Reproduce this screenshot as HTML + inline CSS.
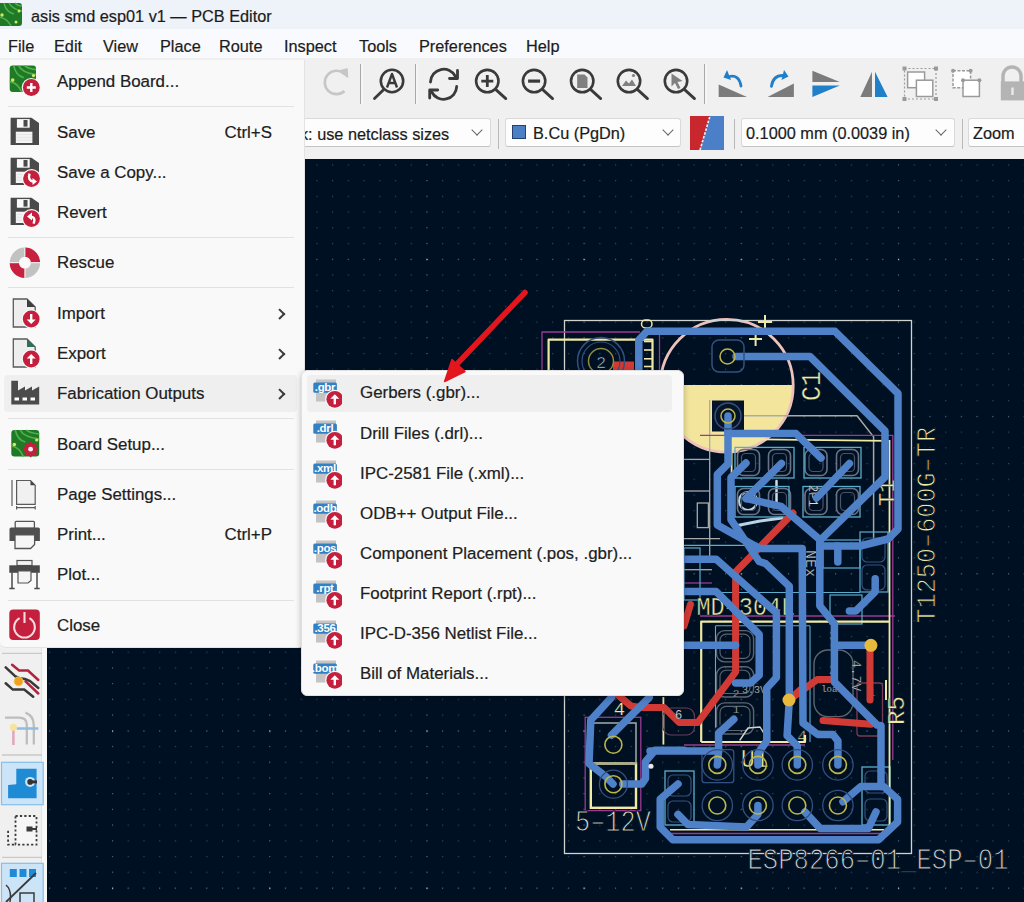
<!DOCTYPE html>
<html><head><meta charset="utf-8">
<style>
*{margin:0;padding:0;box-sizing:border-box}
body{-webkit-text-stroke:0.2px}
svg{-webkit-text-stroke:0}
html,body{width:1024px;height:902px;overflow:hidden;background:#001023;font-family:"Liberation Sans",sans-serif;color:#1b1b1b;position:relative}
.abs{position:absolute}
#title{left:0;top:0;width:1024px;height:29px;background:#eef2f9}
#menubar{left:0;top:29px;width:1024px;height:29px;background:#f9fafd}
.mb{position:absolute;top:37px;font-size:16.3px;color:#1c1c1c;white-space:pre}
#tb1{left:0;top:58px;width:1024px;height:59px;background:#f0f0f0}
#tb2{left:0;top:117px;width:1024px;height:42px;background:#f0f0f0}
#ltb{left:0;top:159px;width:47px;height:743px;background:#f0f0f0}
#canvas{left:47px;top:159px;width:977px;height:743px;background:#001023}
.sep{position:absolute;width:1px;background:#b9b9b9}
.dd{position:absolute;background:#fdfdfd;border:1px solid #d9d9d9;border-bottom-color:#c4c4c4;border-radius:3px;height:29px;top:118px;overflow:hidden}
.ddt{position:absolute;top:5px;font-size:16.3px;white-space:pre;color:#1b1b1b}
.chev{position:absolute;top:7px;width:8px;height:8px;border-right:1.3px solid #666;border-bottom:1.3px solid #666;transform:rotate(45deg)}
#fmenu{left:0;top:60px;width:305px;height:588px;background:#f9f9f9;border-right:1px solid #e3e3e3;border-bottom:1px solid #e3e3e3;border-radius:0 0 6px 6px}
#smenu{left:301px;top:370px;width:383px;height:326px;background:#f9f9f9;border:1px solid #e0e0e0;border-radius:6px;box-shadow:0 2px 6px rgba(0,0,0,0.25)}
.mi{position:absolute;font-size:16.9px;white-space:pre;color:#202020}
.msep{position:absolute;left:8px;width:286px;height:1px;background:#e2e2e2}
.hl{position:absolute;background:#efefef;border-radius:4px}
.arr{position:absolute;width:7.5px;height:7.5px;border-right:2px solid #3a3a3a;border-top:2px solid #3a3a3a;transform:rotate(45deg)}
</style></head>
<body>
<div id="title" class="abs"></div>
<div id="menubar" class="abs"></div>
<div class="abs" style="left:31px;top:7px;font-size:16.3px;white-space:pre;color:#1b1b1b">asis smd esp01 v1 — PCB Editor</div>
<div class="mb" style="left:8px">File</div>
<div class="mb" style="left:54px">Edit</div>
<div class="mb" style="left:103px">View</div>
<div class="mb" style="left:160px">Place</div>
<div class="mb" style="left:219px">Route</div>
<div class="mb" style="left:284px">Inspect</div>
<div class="mb" style="left:359px">Tools</div>
<div class="mb" style="left:419px">Preferences</div>
<div class="mb" style="left:526px">Help</div>
<div id="tb1" class="abs"></div>
<div id="tb2" class="abs"></div>
<div id="canvas" class="abs"></div>
<div id="ltb" class="abs"></div><div class="abs" style="left:41px;top:159px;width:6px;height:743px;background:#f7f8f8;border-left:1px solid #e2e2e2"></div>
<div class="dd" style="left:250px;width:241px"><span class="ddt" style="left:17px;top:5.5px">Track: use netclass sizes</span><span class="chev" style="left:222px"></span></div>
<div class="sep" style="left:498px;top:119px;height:30px"></div>
<div class="dd" style="left:505px;width:176px"><span class="abs" style="left:6px;top:6px;width:14px;height:13.5px;background:#4d7fc4;border:1.5px solid #23406e"></span><span class="ddt" style="left:27px">B.Cu (PgDn)</span><span class="chev" style="left:158px"></span></div>
<div class="sep" style="left:734px;top:119px;height:30px"></div>
<div class="dd" style="left:741px;width:214px"><span class="ddt" style="left:4px">0.1000 mm (0.0039 in)</span><span class="chev" style="left:195px"></span></div>
<div class="sep" style="left:962px;top:119px;height:30px"></div>
<div class="dd" style="left:968px;width:70px"><span class="ddt" style="left:4px">Zoom</span></div>

<svg class="abs" style="left:0;top:0" width="1024" height="902" viewBox="0 0 1024 902"><path d="M344 73.5A11.7 11.7 0 1 0 344.5 91" stroke="#c6c6c6" stroke-width="2.6" fill="none"/><path d="M339.5 71L347 69L347.5 77Z" fill="#c6c6c6" stroke="#c6c6c6" stroke-width="1.5" stroke-linejoin="round"/><path d="M360.5 64V104" stroke="#a9a9a9" stroke-width="1"/><path d="M362.0 64V104" stroke="#fbfbfb" stroke-width="1"/><path d="M415.5 64V104" stroke="#a9a9a9" stroke-width="1"/><path d="M417.0 64V104" stroke="#fbfbfb" stroke-width="1"/><path d="M704.5 64V104" stroke="#a9a9a9" stroke-width="1"/><path d="M706.0 64V104" stroke="#fbfbfb" stroke-width="1"/><circle cx="392" cy="81" r="11.2" stroke="#3a3a3a" stroke-width="2.6" fill="none"/><path d="M383.8 89.5L374.5 98.5" stroke="#3a3a3a" stroke-width="2.8" stroke-linecap="round"/><path d="M387 87.5L392 74L397 87.5M388.8 83H395.2" stroke="#3a3a3a" stroke-width="2.4" fill="none" stroke-linejoin="round"/><path d="M430.5 82A13.2 13.2 0 0 1 455.5 76.5" stroke="#3a3a3a" stroke-width="2.8" fill="none" stroke-linecap="round"/><path d="M457.5 70.5V78.5H449.5" stroke="#3a3a3a" stroke-width="2.8" fill="none" stroke-linecap="round" stroke-linejoin="round"/><path d="M456.7 86.5A13.2 13.2 0 0 1 431.7 92" stroke="#3a3a3a" stroke-width="2.8" fill="none" stroke-linecap="round"/><path d="M429.7 98V90H437.7" stroke="#3a3a3a" stroke-width="2.8" fill="none" stroke-linecap="round" stroke-linejoin="round"/><circle cx="487.3" cy="81.1" r="11.2" stroke="#3a3a3a" stroke-width="2.6" fill="none"/><path d="M495.6 89.4L505.8 98.6" stroke="#3a3a3a" stroke-width="2.8" stroke-linecap="round"/><path d="M481.3 81.1H493.3M487.3 75.1V87.1" stroke="#3a3a3a" stroke-width="2.8"/><circle cx="534.1" cy="81.1" r="11.2" stroke="#3a3a3a" stroke-width="2.6" fill="none"/><path d="M542.4 89.4L552.6 98.6" stroke="#3a3a3a" stroke-width="2.8" stroke-linecap="round"/><path d="M528.1 81.1H540.1" stroke="#3a3a3a" stroke-width="3.2"/><circle cx="582.2" cy="81.1" r="11.2" stroke="#3a3a3a" stroke-width="2.6" fill="none"/><path d="M590.5 89.4L600.7 98.6" stroke="#3a3a3a" stroke-width="2.8" stroke-linecap="round"/><path d="M577.2 74.5H584.5L587.5 77.5V88H577.2Z" fill="#808080"/><circle cx="629" cy="81.1" r="11.2" stroke="#3a3a3a" stroke-width="2.6" fill="none"/><path d="M637.3 89.4L647.5 98.6" stroke="#3a3a3a" stroke-width="2.8" stroke-linecap="round"/><path d="M622 86L626 80.5L629 83.5L632 79.5L636 86Z" fill="#808080"/><circle cx="633.5" cy="75.5" r="1.6" fill="#808080"/><circle cx="676" cy="81.1" r="11.2" stroke="#3a3a3a" stroke-width="2.6" fill="none"/><path d="M684.3 89.4L694.5 98.6" stroke="#3a3a3a" stroke-width="2.8" stroke-linecap="round"/><path d="M671.5 73.5L682.5 81L677.5 82L680.5 88L678 89L675 83L671.5 86.5Z" fill="#808080"/><path d="M718.7 84.4V97.1H747Z" fill="#7b7b7b"/><path d="M729.5 76.5Q739 74.5 741 86" stroke="#1f7fc9" stroke-width="2.8" fill="none" stroke-linecap="round"/><path d="M727 70L723.5 77.5L731 80Z" fill="#1f7fc9"/><path d="M767.5 97.1L793.9 83.4V97.1Z" fill="#7b7b7b"/><path d="M771.4 86.4Q773 75.5 782.5 75.5" stroke="#1f7fc9" stroke-width="2.8" fill="none" stroke-linecap="round"/><path d="M784 70L788.5 76.5L781.5 80Z" fill="#1f7fc9"/><path d="M812.4 70.7L839.8 82L812.4 82Z" fill="#7b7b7b"/><path d="M812.4 85.4H839.8L812.4 97.1Z" fill="#1f7fc9"/><path d="M860.3 97.1L872 71.7V97.1Z" fill="#7b7b7b"/><path d="M875 71.7V97.1H887.6Z" fill="#1f7fc9"/><rect x="904.5" y="68.5" width="31.5" height="30.5" stroke="#9c9c9c" stroke-width="1.2" stroke-dasharray="2 2" fill="none"/><rect x="907.6" y="72" width="17" height="15.7" fill="#fff" stroke="#9a9a9a" stroke-width="1.5"/><rect x="916.4" y="80.2" width="16.4" height="16.3" fill="#fff" stroke="#9a9a9a" stroke-width="1.5"/><rect x="902.5" y="66.5" width="4" height="4" fill="#9a9a9a"/><rect x="934" y="66.5" width="4" height="4" fill="#9a9a9a"/><rect x="902.5" y="97" width="4" height="4" fill="#9a9a9a"/><rect x="934" y="97" width="4" height="4" fill="#9a9a9a"/><rect x="953" y="70.7" width="17.6" height="17" fill="#fff" stroke="#9a9a9a" stroke-width="1.5" stroke-dasharray="3 1.5"/><rect x="963" y="80.2" width="16.4" height="16.3" fill="#fff" stroke="#9a9a9a" stroke-width="1.5"/><circle cx="953" cy="70.7" r="2" fill="#9a9a9a"/><circle cx="970.6" cy="70.7" r="2" fill="#9a9a9a"/><circle cx="963" cy="80.2" r="2" fill="#9a9a9a"/><circle cx="979.4" cy="80.2" r="2" fill="#9a9a9a"/><path d="M1003 82V76A9 9 0 0 1 1021 76V82" stroke="#b4b4b4" stroke-width="3.5" fill="none"/><rect x="1000.8" y="81.4" width="24" height="19" fill="#b4b4b4"/><path d="M1012.5 87.5V95" stroke="#e8e8e8" stroke-width="2.5"/><rect x="690" y="116" width="34" height="34" fill="#4b7fc8"/><path d="M690 116H710L700 150H690Z" fill="#c8272d"/><path d="M700 150L710 116" stroke="#f5f5f5" stroke-width="1.6" stroke-dasharray="2.5 1.5"/><rect x="-2" y="3" width="24" height="23" rx="3" fill="#1f7a27"/><path d="M4 3Q6 12 14 14M9 3Q12 9 22 11M15 3Q18 6 22 6M-2 17Q7 18 11 26" stroke="#52b04c" stroke-width="1.5" fill="none"/><circle cx="2" cy="15" r="1.7" fill="#d9e85a"/><circle cx="19" cy="11" r="1.5" fill="#d9e85a"/><circle cx="16" cy="22" r="1.5" fill="#d9e85a"/><path d="M2 653.3H42" stroke="#c9c9c9" stroke-width="1.3"/><path d="M2 755H42" stroke="#c9c9c9" stroke-width="1.3"/><path d="M2 857.3H42" stroke="#c9c9c9" stroke-width="1.3"/><path d="M5.7 667.3L15.3 676.3Q19 679 25 679L30 681L38.3 688" stroke="#383838" stroke-width="2.5" fill="none" stroke-linecap="round"/><path d="M5.7 683.3L12.8 689.6H24.2L33.2 696.7" stroke="#383838" stroke-width="2.5" fill="none" stroke-linecap="round"/><path d="M12.1 664.8L19.1 670.5H28L38.3 680" stroke="#b0243f" stroke-width="2.5" fill="none" stroke-linecap="round"/><path d="M25.5 681.4L38.3 693.5" stroke="#b0243f" stroke-width="2.5" fill="none" stroke-linecap="round"/><circle cx="18.5" cy="681.4" r="4.5" fill="#f0a020" stroke="#f7d060" stroke-width="1"/><path d="M5 717.7H19Q26.8 717.7 26.8 725V744.5" stroke="#bdbdbd" stroke-width="2.3" fill="none"/><path d="M25.5 712.6Q33.8 716 33.8 725V744.5" stroke="#bdbdbd" stroke-width="2.3" fill="none"/><path d="M13.4 728V745" stroke="#e0a7b8" stroke-width="2.5"/><path d="M16.6 728.5H38.3" stroke="#8fbce3" stroke-width="2.5"/><circle cx="13.4" cy="727.3" r="3.5" fill="#f8e39a"/><rect x="1.5" y="762.3" width="41.7" height="42.4" fill="#cce4f7" stroke="#86bfea" stroke-width="1.2"/><path d="M8.1 785V798.2H36.6V768.8H16.3V784.3Z" fill="#1f8bd5"/><circle cx="30.1" cy="781.9" r="5" fill="#cce4f7"/><circle cx="30.1" cy="781.9" r="2.8" fill="#333"/><path d="M30 781.9H37" stroke="#333" stroke-width="3"/><rect x="15.5" y="816" width="21" height="28.6" stroke="#3a3a3a" stroke-width="1.8" stroke-dasharray="2.2 2.2" fill="#f6f6f6"/><path d="M8.1 830.7V844.6H15.5" stroke="#3a3a3a" stroke-width="1.8" stroke-dasharray="2.2 2.2" fill="none"/><rect x="26.5" y="826.5" width="6" height="5" fill="#3a3a3a"/><path d="M32 829H37" stroke="#3a3a3a" stroke-width="2"/><rect x="1.5" y="863.3" width="41.7" height="45" fill="#cce4f7" stroke="#86bfea" stroke-width="1.2"/><rect x="9.8" y="869" width="7" height="8" fill="#1f8bd5"/><rect x="19.5" y="869" width="7" height="8" fill="#1f8bd5"/><rect x="29" y="869" width="7" height="8" fill="#1f8bd5"/><path d="M6 902L36 873" stroke="#3a3a3a" stroke-width="1.8"/><path d="M6 885Q12 890 10 902M20 902V893H34V902" stroke="#3a3a3a" stroke-width="1.5" fill="none"/></svg>
<svg class="abs" style="left:0;top:0" width="1024" height="902" viewBox="0 0 1024 902"><g clip-path="url(#cv)"><defs><pattern id="g" x="1.9" y="7.1" width="15.72" height="15.72" patternUnits="userSpaceOnUse"><rect x="-1.2" y="-1.2" width="2.4" height="2.4" fill="#36465a"/></pattern><pattern id="gr" x="1.9" y="259" width="15.72" height="157.2" patternUnits="userSpaceOnUse"><rect x="-1" y="-1" width="2" height="2" fill="#4f5d6e"/></pattern><pattern id="gc" x="112" y="7.1" width="157.2" height="15.72" patternUnits="userSpaceOnUse"><rect x="-1" y="-1" width="2" height="2" fill="#4f5d6e"/></pattern><pattern id="G" x="112" y="259" width="157.2" height="157.2" patternUnits="userSpaceOnUse"><rect x="-1.2" y="-1.2" width="2.4" height="2.4" fill="#a9b2bc"/></pattern><clipPath id="c1h"><rect x="650" y="385" width="160" height="80"/></clipPath><clipPath id="cv"><rect x="47" y="159" width="977" height="743"/></clipPath></defs><rect x="47" y="159" width="977" height="743" fill="url(#g)"/><rect x="47" y="159" width="977" height="743" fill="url(#gr)"/><rect x="47" y="159" width="977" height="743" fill="url(#gc)"/><rect x="47" y="159" width="977" height="743" fill="url(#G)"/><circle cx="726.8" cy="385.7" r="66.4" fill="#f3e69c" clip-path="url(#c1h)"/><circle cx="726.8" cy="385.7" r="66.4" stroke="#eec2ba" stroke-width="2.8" fill="none"/><rect x="564.5" y="320.5" width="347.0" height="533.0" rx="0" stroke="#d0d2cd" stroke-width="1.3" fill="none"/><path d="M744.0 415.8 L857.0 415.8 L873.6 436.9 L873.6 540.0" stroke="#a9a9a9" stroke-width="1.5" fill="none" stroke-linejoin="round" stroke-linecap="butt"/><path d="M709.7 400.0 L709.7 560.0" stroke="#a9a9a9" stroke-width="1.3" fill="none" stroke-linejoin="round" stroke-linecap="butt"/><path d="M684.0 459.4 L709.7 459.4" stroke="#a9a9a9" stroke-width="1.3" fill="none" stroke-linejoin="round" stroke-linecap="butt"/><path d="M684.0 491.0 L709.7 491.0" stroke="#a9a9a9" stroke-width="1.3" fill="none" stroke-linejoin="round" stroke-linecap="butt"/><path d="M684.0 538.6 L720.0 538.6" stroke="#a9a9a9" stroke-width="1.3" fill="none" stroke-linejoin="round" stroke-linecap="butt"/><path d="M684.0 545.3 L764.0 545.3" stroke="#5aaecb" stroke-width="1.2" fill="none" stroke-linejoin="round" stroke-linecap="butt"/><rect x="697.3" y="503" width="11.1" height="24.6" rx="0" stroke="#a9a9a9" stroke-width="1.3" fill="none"/><path d="M684.0 569.7 L712.0 569.7" stroke="#a9a9a9" stroke-width="1.3" fill="none" stroke-linejoin="round" stroke-linecap="butt"/><path d="M684.0 583.0 L712.0 583.0" stroke="#9a3a93" stroke-width="1.3" fill="none" stroke-linejoin="round" stroke-linecap="butt"/><path d="M735.0 526.0 L760.0 521.0 L782.0 518.0" stroke="#b9d4e4" stroke-width="3" fill="none" stroke-linejoin="round" stroke-linecap="round"/><path d="M776.5 481.0 L776.5 505.0" stroke="#d0dbe3" stroke-width="2.5" fill="none" stroke-linejoin="round" stroke-linecap="round"/><circle cx="748" cy="501" r="9" stroke="#b9d4e4" stroke-width="2.2" fill="none"/><path d="M542.0 380.0 L542.0 332.0 L640.0 332.0" stroke="#9a3a93" stroke-width="1.3" fill="none" stroke-linejoin="round" stroke-linecap="butt"/><path d="M659.5 335.0 L659.5 380.0" stroke="#9a3a93" stroke-width="1.3" fill="none" stroke-linejoin="round" stroke-linecap="butt"/><path d="M700.0 435.3 L893.0 435.3" stroke="#9a3a93" stroke-width="1.3" fill="none" stroke-linejoin="round" stroke-linecap="butt"/><path d="M892.8 435.0 L892.8 760.0" stroke="#9a3a93" stroke-width="1.3" fill="none" stroke-linejoin="round" stroke-linecap="butt"/><path d="M700.0 616.0 L895.0 616.0" stroke="#9a3a93" stroke-width="1.3" fill="none" stroke-linejoin="round" stroke-linecap="butt"/><path d="M684.0 745.0 L805.0 745.0" stroke="#9a3a93" stroke-width="1.3" fill="none" stroke-linejoin="round" stroke-linecap="butt"/><path d="M667.0 833.5 L890.0 833.5" stroke="#9a3a93" stroke-width="1.3" fill="none" stroke-linejoin="round" stroke-linecap="butt"/><rect x="585.2" y="717.3" width="55.6" height="93.3" rx="0" stroke="#9a3a93" stroke-width="1.3" fill="none"/><rect x="737.5" y="449.5" width="22.0" height="26.0" rx="6" stroke="#6a7386" stroke-width="1.6" fill="none"/><rect x="741.5" y="453.5" width="14.0" height="18.0" rx="4" stroke="#4a5468" stroke-width="1.2" fill="none"/><rect x="768.5" y="449.5" width="22.0" height="26.0" rx="6" stroke="#6a7386" stroke-width="1.6" fill="none"/><rect x="772.5" y="453.5" width="14.0" height="18.0" rx="4" stroke="#4a5468" stroke-width="1.2" fill="none"/><rect x="805" y="449.5" width="22.0" height="26.0" rx="6" stroke="#6a7386" stroke-width="1.6" fill="none"/><rect x="809" y="453.5" width="14.0" height="18.0" rx="4" stroke="#4a5468" stroke-width="1.2" fill="none"/><rect x="836.5" y="449.5" width="22.0" height="26.0" rx="6" stroke="#6a7386" stroke-width="1.6" fill="none"/><rect x="840.5" y="453.5" width="14.0" height="18.0" rx="4" stroke="#4a5468" stroke-width="1.2" fill="none"/><rect x="737.5" y="488.5" width="22.0" height="26.0" rx="6" stroke="#6a7386" stroke-width="1.6" fill="none"/><rect x="741.5" y="492.5" width="14.0" height="18.0" rx="4" stroke="#4a5468" stroke-width="1.2" fill="none"/><rect x="768.5" y="488.5" width="22.0" height="26.0" rx="6" stroke="#6a7386" stroke-width="1.6" fill="none"/><rect x="772.5" y="492.5" width="14.0" height="18.0" rx="4" stroke="#4a5468" stroke-width="1.2" fill="none"/><rect x="805" y="488.5" width="22.0" height="26.0" rx="6" stroke="#6a7386" stroke-width="1.6" fill="none"/><rect x="809" y="492.5" width="14.0" height="18.0" rx="4" stroke="#4a5468" stroke-width="1.2" fill="none"/><rect x="836.5" y="488.5" width="22.0" height="26.0" rx="6" stroke="#6a7386" stroke-width="1.6" fill="none"/><rect x="840.5" y="492.5" width="14.0" height="18.0" rx="4" stroke="#4a5468" stroke-width="1.2" fill="none"/><rect x="735" y="447.4" width="59.0" height="30.6" rx="0" stroke="#5aaecb" stroke-width="1.3" fill="none"/><rect x="804" y="447.4" width="57.0" height="30.6" rx="0" stroke="#5aaecb" stroke-width="1.3" fill="none"/><rect x="735" y="486.5" width="54.0" height="30.5" rx="0" stroke="#5aaecb" stroke-width="1.3" fill="none"/><rect x="803" y="486.5" width="57.0" height="30.5" rx="0" stroke="#5aaecb" stroke-width="1.3" fill="none"/><text x="0" y="0" fill="#d8dde0" stroke="#001023" stroke-width="0.2" font-family="Liberation Mono" font-size="12" text-anchor="start" letter-spacing="0" font-weight="normal" transform="translate(809 485) rotate(90) scale(1 1.0)">2P1</text><rect x="860" y="532" width="28.0" height="60.0" rx="0" stroke="#5aaecb" stroke-width="1.2" fill="none"/><rect x="862" y="538" width="23.0" height="24.0" rx="5" stroke="#34507e" stroke-width="1.2" fill="none"/><rect x="862" y="565" width="23.0" height="25.0" rx="5" stroke="#34507e" stroke-width="1.2" fill="none"/><rect x="823" y="540" width="37.0" height="28.0" rx="0" stroke="#5aaecb" stroke-width="1.2" fill="none"/><rect x="830" y="595" width="32.0" height="29.0" rx="0" stroke="#5aaecb" stroke-width="1.2" fill="none"/><rect x="716.5" y="630.6" width="37.1" height="31.3" rx="8" stroke="#5d6470" stroke-width="1.4" fill="none"/><rect x="720" y="634.1" width="30.0" height="24.3" rx="6" stroke="#5d6470" stroke-width="1.1" fill="none"/><rect x="716.5" y="666.8" width="37.1" height="30.2" rx="8" stroke="#5d6470" stroke-width="1.4" fill="none"/><rect x="720" y="670.3" width="30.0" height="23.2" rx="6" stroke="#5d6470" stroke-width="1.1" fill="none"/><rect x="716.5" y="702.9" width="37.1" height="31.1" rx="8" stroke="#5d6470" stroke-width="1.4" fill="none"/><rect x="720" y="706.4" width="30.0" height="24.1" rx="6" stroke="#5d6470" stroke-width="1.1" fill="none"/><path d="M715.5 626.0 L715.5 742.0" stroke="#5aaecb" stroke-width="1.1" fill="none" stroke-linejoin="round" stroke-linecap="butt"/><path d="M715.5 625.7 L810.0 625.7" stroke="#5aaecb" stroke-width="1.1" fill="none" stroke-linejoin="round" stroke-linecap="butt"/><rect x="814" y="650" width="39.0" height="66.6" rx="14" stroke="#5d6470" stroke-width="1.4" fill="none"/><rect x="857" y="683" width="25.5" height="53.0" rx="3" stroke="#7a3a55" stroke-width="1.3" fill="none"/><path d="M810.0 626.0 L810.0 742.0" stroke="#5aaecb" stroke-width="1.1" fill="none" stroke-linejoin="round" stroke-linecap="butt"/><text x="0" y="0" fill="#d0d2cd" stroke="#001023" stroke-width="0.4" font-family="Liberation Mono" font-size="13" text-anchor="middle" letter-spacing="0" font-weight="normal" transform="translate(833 640) rotate(0) scale(1 1.0)">3</text><text x="0" y="0" fill="#d0d2cd" stroke="#001023" stroke-width="0.4" font-family="Liberation Mono" font-size="13" text-anchor="middle" letter-spacing="0" font-weight="normal" transform="translate(833 674) rotate(0) scale(1 1.0)">2</text><text x="0" y="0" fill="#d0d2cd" stroke="#001023" stroke-width="0.3" font-family="Liberation Mono" font-size="11" text-anchor="middle" letter-spacing="0" font-weight="normal" transform="translate(736 660) rotate(0) scale(1 1.0)">3</text><text x="0" y="0" fill="#d0d2cd" stroke="#001023" stroke-width="0.3" font-family="Liberation Mono" font-size="11" text-anchor="middle" letter-spacing="0" font-weight="normal" transform="translate(736 697) rotate(0) scale(1 1.0)">2</text><text x="0" y="0" fill="#d0d2cd" stroke="#001023" stroke-width="0.3" font-family="Liberation Mono" font-size="11" text-anchor="middle" letter-spacing="0" font-weight="normal" transform="translate(736 713) rotate(0) scale(1 1.0)">1</text><text x="0" y="0" fill="#d0d2cd" stroke="#001023" stroke-width="0.2" font-family="Liberation Mono" font-size="10" text-anchor="middle" letter-spacing="0" font-weight="normal" transform="translate(754 693) rotate(0) scale(1 1.0)">3.3V</text><text x="0" y="0" fill="#d0d2cd" stroke="#001023" stroke-width="0.2" font-family="Liberation Mono" font-size="9" text-anchor="middle" letter-spacing="0" font-weight="normal" transform="translate(832 692) rotate(0) scale(1 1.0)">load</text><text x="0" y="0" fill="#d0d2cd" stroke="#001023" stroke-width="0.3" font-family="Liberation Mono" font-size="13" text-anchor="start" letter-spacing="0" font-weight="normal" transform="translate(852 660) rotate(90) scale(1 1.0)">4.7V</text><path d="M740.0 740.0 L748.0 728.0 L760.0 727.0 L765.0 735.0" stroke="#d0d2cd" stroke-width="1.4" fill="none" stroke-linejoin="round" stroke-linecap="round"/><text x="0" y="0" fill="#efe9a6" stroke="#001023" stroke-width="0.5" font-family="Liberation Mono" font-size="16" text-anchor="middle" letter-spacing="0" font-weight="normal" transform="translate(802 742) rotate(0) scale(1 1.0)">4</text><text x="0" y="0" fill="#d0d2cd" stroke="#001023" stroke-width="0.3" font-family="Liberation Mono" font-size="11" text-anchor="middle" letter-spacing="0" font-weight="normal" transform="translate(872 696) rotate(0) scale(1 1.0)">1</text><rect x="684" y="548" width="16.0" height="52.0" rx="0" stroke="#5aaecb" stroke-width="1.2" fill="none"/><rect x="665" y="771" width="29.0" height="54.0" rx="0" stroke="#5aaecb" stroke-width="1.3" fill="none"/><rect x="668" y="775" width="23.0" height="21.0" rx="5" stroke="#34507e" stroke-width="1.2" fill="none"/><rect x="668" y="801" width="23.0" height="21.0" rx="5" stroke="#34507e" stroke-width="1.2" fill="none"/><rect x="862" y="767" width="28.0" height="58.0" rx="0" stroke="#5aaecb" stroke-width="1.3" fill="none"/><rect x="865" y="771" width="22.0" height="22.0" rx="5" stroke="#34507e" stroke-width="1.2" fill="none"/><rect x="865" y="799" width="22.0" height="22.0" rx="5" stroke="#34507e" stroke-width="1.2" fill="none"/><rect x="702" y="749.7" width="31.8" height="33.0" rx="3" stroke="#34507e" stroke-width="1.3" fill="none"/><path d="M548.6 380.0 L548.6 339.7 L652.5 339.7 L652.5 380.0" stroke="#efe9a6" stroke-width="2.2" fill="none" stroke-linejoin="round" stroke-linecap="butt"/><path d="M731.6 480.0 L731.6 439.0 L888.4 440.8" stroke="#efe9a6" stroke-width="1.8" fill="none" stroke-linejoin="round" stroke-linecap="butt"/><path d="M889.5 440.0 L889.5 830.0" stroke="#efe9a6" stroke-width="1.8" fill="none" stroke-linejoin="round" stroke-linecap="butt"/><path d="M701.2 742.0 L701.2 621.6 L889.0 621.6" stroke="#efe9a6" stroke-width="2.2" fill="none" stroke-linejoin="round" stroke-linecap="butt"/><path d="M701.2 742.0 L805.0 742.0 L805.0 735.0" stroke="#efe9a6" stroke-width="2.2" fill="none" stroke-linejoin="round" stroke-linecap="butt"/><path d="M670.0 829.7 L884.0 829.7" stroke="#efe9a6" stroke-width="1.6" fill="none" stroke-linejoin="round" stroke-linecap="butt"/><path d="M663.4 697.0 L663.4 744.6" stroke="#efe9a6" stroke-width="1.8" fill="none" stroke-linejoin="round" stroke-linecap="butt"/><rect x="663" y="708" width="31.5" height="27.0" rx="8" stroke="#6a3a5a" stroke-width="1.2" fill="none"/><text x="0" y="0" fill="#efe9a6" stroke="#001023" stroke-width="0.4" font-family="Liberation Mono" font-size="22" text-anchor="start" letter-spacing="0" font-weight="normal" transform="translate(894 506) rotate(-90) scale(1 1.0)">T1</text><rect x="590.8" y="763.5" width="45.2" height="44.3" rx="0" stroke="#efe9a6" stroke-width="2.4" fill="none"/><rect x="590.8" y="723" width="45.2" height="40.5" rx="0" stroke="#a9a9a9" stroke-width="1.5" fill="none"/><path d="M758.0 322.0 L772.0 322.0" stroke="#efe9a6" stroke-width="2" fill="none" stroke-linejoin="round" stroke-linecap="butt"/><path d="M765.0 315.0 L765.0 329.0" stroke="#efe9a6" stroke-width="2" fill="none" stroke-linejoin="round" stroke-linecap="butt"/><path d="M749.0 339.0 L762.0 339.0" stroke="#efe9a6" stroke-width="2" fill="none" stroke-linejoin="round" stroke-linecap="butt"/><path d="M755.6 333.0 L755.6 346.0" stroke="#efe9a6" stroke-width="2" fill="none" stroke-linejoin="round" stroke-linecap="butt"/><path d="M886.0 680.0 L886.0 700.0" stroke="#efe9a6" stroke-width="2" fill="none" stroke-linejoin="round" stroke-linecap="butt"/><text x="0" y="0" fill="#efe9a6" stroke="#001023" stroke-width="0.3" font-family="Liberation Mono" font-size="25" text-anchor="start" letter-spacing="0" font-weight="normal" transform="translate(819.5 401) rotate(-90) scale(1 1.1)">C1</text><text x="0" y="0" fill="#efe9a6" stroke="#001023" stroke-width="0.9" font-family="Liberation Mono" font-size="25.2" text-anchor="start" letter-spacing="0" font-weight="normal" transform="translate(935 623.5) rotate(-90) scale(1 1.08)">T1250–600G–TR</text><text x="0" y="0" fill="#cfcfcf" stroke="#001023" stroke-width="0.9" font-family="Liberation Mono" font-size="25.6" text-anchor="start" letter-spacing="0" font-weight="normal" transform="translate(747.5 868.5) rotate(0) scale(1 1.15)">ESP8266–01_ESP–01</text><text x="0" y="0" fill="#dcdac8" stroke="#001023" stroke-width="0.9" font-family="Liberation Mono" font-size="25.3" text-anchor="start" letter-spacing="0" font-weight="normal" transform="translate(575 831) rotate(0) scale(1 1.2)">5–12V</text><text x="0" y="0" fill="#efe9a6" stroke="#001023" stroke-width="0.4" font-family="Liberation Mono" font-size="24" text-anchor="start" letter-spacing="0" font-weight="normal" transform="translate(904 725) rotate(-90) scale(1 1.0)">R5</text><text x="0" y="0" fill="#efe9a6" stroke="#001023" stroke-width="0.4" font-family="Liberation Mono" font-size="23.5" text-anchor="start" letter-spacing="0" font-weight="normal" transform="translate(696.5 614.5) rotate(0) scale(1 1.12)">MD–304L</text><text x="0" y="0" fill="#efe9a6" stroke="#001023" stroke-width="0.4" font-family="Liberation Mono" font-size="23" text-anchor="start" letter-spacing="0" font-weight="normal" transform="translate(741 767) rotate(0) scale(1 1.1)">U1</text><text x="0" y="0" fill="#d8dde0" stroke="#001023" stroke-width="0.3" font-family="Liberation Mono" font-size="15" text-anchor="start" letter-spacing="0" font-weight="normal" transform="translate(806 550) rotate(90) scale(1 1.0)">NEx</text><path d="M684.0 592.5 L860.0 592.5" stroke="#5aaecb" stroke-width="1.1" fill="none" stroke-linejoin="round" stroke-linecap="butt"/><path d="M644.0 341.5 L652.5 341.5" stroke="#efe9a6" stroke-width="1.6" fill="none" stroke-linejoin="round" stroke-linecap="butt"/><path d="M644.0 350.0 L652.5 350.0" stroke="#efe9a6" stroke-width="1.6" fill="none" stroke-linejoin="round" stroke-linecap="butt"/><path d="M644.0 358.8 L652.5 358.8" stroke="#efe9a6" stroke-width="1.6" fill="none" stroke-linejoin="round" stroke-linecap="butt"/><path d="M644.0 366.5 L652.5 366.5" stroke="#efe9a6" stroke-width="1.6" fill="none" stroke-linejoin="round" stroke-linecap="butt"/><rect x="641.5" y="320" width="10.5" height="8.0" rx="4" stroke="#efe9a6" stroke-width="1.5" fill="none"/><text x="0" y="0" fill="#efe9a6" stroke="#001023" stroke-width="0.25" font-family="Liberation Mono" font-size="19" text-anchor="middle" letter-spacing="0" font-weight="normal" transform="translate(619.5 714.5) rotate(0) scale(1 0.95)">4</text><text x="0" y="0" fill="#d0d2cd" stroke="#001023" stroke-width="0.9" font-family="Liberation Mono" font-size="10" text-anchor="start" letter-spacing="0" font-weight="normal" transform="translate(718 735) rotate(-40) scale(1 1.0)">GND</text><rect x="712" y="400.5" width="32" height="31" fill="#06142a"/><path d="M613.0 366.0 L634.0 366.0" stroke="#d23a36" stroke-width="9" fill="none" stroke-linejoin="round" stroke-linecap="butt"/><path d="M793.0 513.0 L735.6 572.0 L735.6 672.0 L698.0 722.4 L679.0 722.4 L664.0 707.4 L640.7 707.4 L631.0 706.0 L612.0 690.0" stroke="#d23a36" stroke-width="7" fill="none" stroke-linejoin="round" stroke-linecap="round"/><path d="M684.0 626.0 L690.4 604.4" stroke="#d23a36" stroke-width="7" fill="none" stroke-linejoin="round" stroke-linecap="round"/><path d="M789.0 700.0 L817.2 679.6 L832.2 679.6" stroke="#d23a36" stroke-width="7" fill="none" stroke-linejoin="round" stroke-linecap="round"/><path d="M870.0 645.0 L870.0 700.0" stroke="#d23a36" stroke-width="7" fill="none" stroke-linejoin="round" stroke-linecap="round"/><path d="M823.0 720.5 L871.0 724.3" stroke="#d23a36" stroke-width="7" fill="none" stroke-linejoin="round" stroke-linecap="round"/><path d="M789.0 700.0 L800.0 690.0" stroke="#d23a36" stroke-width="7" fill="none" stroke-linejoin="round" stroke-linecap="round"/><path d="M638.8 372.0 L638.8 340.0 L647.0 331.3 L835.0 331.3 L898.0 393.5 L898.0 529.0 L888.0 539.0 L860.0 546.0 L819.8 546.0" stroke="#4f81c9" stroke-width="7.5" fill="none" stroke-linejoin="round" stroke-linecap="round"/><path d="M837.8 546.0 L837.8 562.0" stroke="#4f81c9" stroke-width="7.5" fill="none" stroke-linejoin="round" stroke-linecap="round"/><path d="M736.0 356.5 L810.0 356.5 L885.0 431.0 L885.0 477.0 L819.8 540.6 L819.8 605.8 L834.4 623.8 L834.4 682.0 L877.0 725.0 L881.0 725.6 L881.0 786.5" stroke="#4f81c9" stroke-width="7.5" fill="none" stroke-linejoin="round" stroke-linecap="round"/><path d="M728.0 416.0 L728.0 433.6 L796.0 433.6 L821.0 458.0" stroke="#4f81c9" stroke-width="7.5" fill="none" stroke-linejoin="round" stroke-linecap="round"/><path d="M728.0 430.0 L728.0 463.9 L717.3 474.5 L717.3 525.0 L759.8 548.6 L802.2 548.6 L803.0 723.0 L817.6 734.4 L832.8 734.4 L837.9 740.8 L837.9 765.0" stroke="#4f81c9" stroke-width="7.5" fill="none" stroke-linejoin="round" stroke-linecap="round"/><path d="M746.0 463.0 L731.0 477.5 L731.0 519.7 L759.2 561.5 L765.6 563.6 L789.3 586.2 L789.3 700.0 L787.1 735.7 L797.3 745.9 L797.3 765.0" stroke="#4f81c9" stroke-width="7.5" fill="none" stroke-linejoin="round" stroke-linecap="round"/><path d="M781.4 463.5 L746.0 498.5" stroke="#4f81c9" stroke-width="7.5" fill="none" stroke-linejoin="round" stroke-linecap="round"/><path d="M849.4 463.5 L816.6 498.0" stroke="#4f81c9" stroke-width="7.5" fill="none" stroke-linejoin="round" stroke-linecap="round"/><path d="M746.5 498.5 L781.0 506.4 L818.4 538.4" stroke="#4f81c9" stroke-width="7.5" fill="none" stroke-linejoin="round" stroke-linecap="round"/><path d="M684.0 559.3 L716.2 559.3 L774.2 610.9 L776.4 613.0 L776.4 677.5 L766.7 688.2 L766.8 740.8 L757.9 753.5 L757.9 765.0" stroke="#4f81c9" stroke-width="7.5" fill="none" stroke-linejoin="round" stroke-linecap="round"/><path d="M684.0 591.6 L716.2 591.6 L759.2 634.5 L759.2 675.3 L750.6 682.9 L735.6 682.9" stroke="#4f81c9" stroke-width="7.5" fill="none" stroke-linejoin="round" stroke-linecap="round"/><path d="M684.0 645.3 L735.6 645.3" stroke="#4f81c9" stroke-width="7.5" fill="none" stroke-linejoin="round" stroke-linecap="round"/><path d="M875.2 578.7 L875.2 591.6 L855.9 610.9 L849.4 610.9" stroke="#4f81c9" stroke-width="7.5" fill="none" stroke-linejoin="round" stroke-linecap="round"/><path d="M834.4 645.3 L870.9 645.3" stroke="#4f81c9" stroke-width="7.5" fill="none" stroke-linejoin="round" stroke-linecap="round"/><path d="M650.0 751.0 L718.6 751.0 L717.3 764.9" stroke="#4f81c9" stroke-width="7.5" fill="none" stroke-linejoin="round" stroke-linecap="round"/><path d="M718.6 751.0 L718.6 733.2 L733.8 719.2" stroke="#4f81c9" stroke-width="7.5" fill="none" stroke-linejoin="round" stroke-linecap="round"/><path d="M611.5 697.5 L590.8 720.0 L589.0 763.5 L606.0 776.7 L613.0 784.0" stroke="#4f81c9" stroke-width="7.5" fill="none" stroke-linejoin="round" stroke-linecap="round"/><path d="M649.2 697.5 L611.5 735.2" stroke="#4f81c9" stroke-width="7.5" fill="none" stroke-linejoin="round" stroke-linecap="round"/><path d="M622.8 784.0 L641.7 784.0 L645.5 778.6 L645.5 761.6 L655.0 750.3 L684.0 750.3" stroke="#4f81c9" stroke-width="7.5" fill="none" stroke-linejoin="round" stroke-linecap="round"/><path d="M678.0 784.0 L660.2 799.2 L660.2 827.1 L672.9 839.8 L878.5 839.8 L897.6 822.0 L897.6 799.2 L883.6 786.5 L860.8 786.5 L843.0 801.7" stroke="#4f81c9" stroke-width="7.5" fill="none" stroke-linejoin="round" stroke-linecap="round"/><path d="M678.0 814.4 L688.0 824.6 L746.5 827.1 L757.9 814.4 L757.9 805.5" stroke="#4f81c9" stroke-width="7.5" fill="none" stroke-linejoin="round" stroke-linecap="round"/><path d="M804.9 811.9 L820.1 828.4 L868.4 828.4 L876.0 811.9" stroke="#4f81c9" stroke-width="7.5" fill="none" stroke-linejoin="round" stroke-linecap="round"/><text x="0" y="0" fill="#c8cdd8" stroke="#001023" stroke-width="0.6" font-family="Liberation Mono" font-size="17" text-anchor="middle" letter-spacing="0" font-weight="normal" transform="translate(601 368) rotate(0) scale(1 1.0)">2</text><circle cx="601" cy="361" r="19" stroke="#34507e" stroke-width="1.2" fill="none"/><text x="0" y="0" fill="#e8e8e8" stroke="#001023" stroke-width="0.2" font-family="Liberation Mono" font-size="12" text-anchor="middle" letter-spacing="0" font-weight="normal" transform="translate(678.5 719) rotate(0) scale(1 1.0)">6</text><circle cx="601" cy="361" r="23.5" stroke="#34507e" stroke-width="1.5" fill="none"/><circle cx="601" cy="361" r="12.5" stroke="#8f8c3a" stroke-width="1.5" fill="none"/><rect x="712" y="340" width="32.0" height="32.0" rx="7" stroke="#34507e" stroke-width="1.5" fill="none"/><circle cx="727.5" cy="356.5" r="7.5" stroke="#bdb64a" stroke-width="1.5" fill="none"/><circle cx="728" cy="416" r="13" stroke="#34507e" stroke-width="1.5" fill="none"/><circle cx="728" cy="416" r="7" stroke="#bdb64a" stroke-width="1.5" fill="none"/><circle cx="717.3" cy="764.9" r="15.2" stroke="#34507e" stroke-width="1.3" fill="none"/><circle cx="717.3" cy="764.9" r="8.5" stroke="#bdb64a" stroke-width="1.6" fill="none"/><circle cx="717.3" cy="805.5" r="15.2" stroke="#34507e" stroke-width="1.3" fill="none"/><circle cx="717.3" cy="805.5" r="8.5" stroke="#bdb64a" stroke-width="1.6" fill="none"/><circle cx="757.9" cy="764.9" r="15.2" stroke="#34507e" stroke-width="1.3" fill="none"/><circle cx="757.9" cy="764.9" r="8.5" stroke="#bdb64a" stroke-width="1.6" fill="none"/><circle cx="757.9" cy="805.5" r="15.2" stroke="#34507e" stroke-width="1.3" fill="none"/><circle cx="757.9" cy="805.5" r="8.5" stroke="#bdb64a" stroke-width="1.6" fill="none"/><circle cx="797.3" cy="764.9" r="15.2" stroke="#34507e" stroke-width="1.3" fill="none"/><circle cx="797.3" cy="764.9" r="8.5" stroke="#bdb64a" stroke-width="1.6" fill="none"/><circle cx="797.3" cy="805.5" r="15.2" stroke="#34507e" stroke-width="1.3" fill="none"/><circle cx="797.3" cy="805.5" r="8.5" stroke="#bdb64a" stroke-width="1.6" fill="none"/><circle cx="837.9" cy="764.9" r="15.2" stroke="#34507e" stroke-width="1.3" fill="none"/><circle cx="837.9" cy="764.9" r="8.5" stroke="#bdb64a" stroke-width="1.6" fill="none"/><circle cx="837.9" cy="805.5" r="15.2" stroke="#34507e" stroke-width="1.3" fill="none"/><circle cx="837.9" cy="805.5" r="8.5" stroke="#bdb64a" stroke-width="1.6" fill="none"/><circle cx="613.4" cy="744.7" r="8.5" stroke="#bdb64a" stroke-width="1.6" fill="none"/><circle cx="613.4" cy="784.2" r="8.5" stroke="#bdb64a" stroke-width="1.6" fill="none"/><circle cx="613.4" cy="784.2" r="14" stroke="#34507e" stroke-width="1.3" fill="none"/><circle cx="789" cy="700" r="6.5" stroke="none" stroke-width="0" fill="#e8b93c"/><circle cx="870.9" cy="645.3" r="6.5" stroke="none" stroke-width="0" fill="#e8b93c"/><circle cx="651" cy="766.3" r="2.5" stroke="none" stroke-width="0" fill="#e8e8e8"/></g></svg>
<div id="fmenu" class="abs"></div>
<div class="hl" style="left:4px;top:374.5px;width:293px;height:37.5px"></div>
<div class="mi" style="left:57px;top:61.5px;line-height:40px">Append Board...</div>
<svg class="abs" style="left:8px;top:65px" width="32" height="32" viewBox="0 0 32 32"><rect x="1.7" y="0.6" width="26.3" height="26.4" rx="3" fill="#1f7a27"/><path d="M5.7 0.6Q7.7 10.6 15.7 12.6M10.7 0.6Q13.7 7.6 28 9.6M16.7 0.6Q19.7 3.6 28 4.6M1.7 16.6Q9.7 17.6 13.7 27" stroke="#52b04c" stroke-width="1.6" fill="none"/><circle cx="4.7" cy="15.1" r="1.8" fill="#d9e85a"/><circle cx="25.5" cy="10.6" r="1.6" fill="#d9e85a"/><circle cx="23.3" cy="22.5" r="9.6" fill="#f9f9f9"/><circle cx="23.3" cy="22.5" r="8.4" fill="#c41f3d"/><path d="M18.8 22.5H27.8M23.3 18.0V27.0" stroke="#fff" stroke-width="2.4"/></svg>
<div class="msep" style="top:106.0px"></div>
<div class="mi" style="left:57px;top:112.5px;line-height:40px">Save</div>
<div class="mi" style="right:752px;top:112.5px;line-height:40px">Ctrl+S</div>
<svg class="abs" style="left:8px;top:116px" width="32" height="32" viewBox="0 0 32 32"><path d="M2.6 1.8H23.5L31 7V29H2.6Z" fill="#4a4a4a"/><rect x="8.9" y="3.1" width="12.8" height="8.6" fill="#fafafa"/><rect x="15.5" y="4" width="4" height="6.6" fill="#4a4a4a"/><rect x="7.8" y="15.7" width="16.6" height="11.3" fill="#f4f4f4"/><path d="M8.5 18.5H24M8.5 21.3H24M8.5 24.1H24" stroke="#d8d8d8" stroke-width="0.6"/></svg>
<div class="mi" style="left:57px;top:152.5px;line-height:40px">Save a Copy...</div>
<svg class="abs" style="left:8px;top:156px" width="32" height="32" viewBox="0 0 32 32"><path d="M2.6 1.8H23.5L31 7V29H2.6Z" fill="#4a4a4a"/><rect x="8.9" y="3.1" width="12.8" height="8.6" fill="#fafafa"/><rect x="15.5" y="4" width="4" height="6.6" fill="#4a4a4a"/><rect x="7.8" y="15.7" width="16.6" height="11.3" fill="#f4f4f4"/><path d="M8.5 18.5H24M8.5 21.3H24M8.5 24.1H24" stroke="#d8d8d8" stroke-width="0.6"/><circle cx="23.5" cy="22.6" r="9.6" fill="#f9f9f9"/><circle cx="23.5" cy="22.6" r="8.4" fill="#c41f3d"/><path d="M21.5 17.6Q19.5 24.6 25.5 25.6" stroke="#fff" stroke-width="2.4" fill="none"/><path d="M24.5 22.1L29.0 25.6L24.5 29.1Z" fill="#fff"/></svg>
<div class="mi" style="left:57px;top:192.5px;line-height:40px">Revert</div>
<svg class="abs" style="left:8px;top:196px" width="32" height="32" viewBox="0 0 32 32"><path d="M2.6 1.8H23.5L31 7V29H2.6Z" fill="#4a4a4a"/><rect x="8.9" y="3.1" width="12.8" height="8.6" fill="#fafafa"/><rect x="15.5" y="4" width="4" height="6.6" fill="#4a4a4a"/><rect x="7.8" y="15.7" width="16.6" height="11.3" fill="#f4f4f4"/><path d="M8.5 18.5H24M8.5 21.3H24M8.5 24.1H24" stroke="#d8d8d8" stroke-width="0.6"/><circle cx="23.5" cy="22.6" r="9.6" fill="#f9f9f9"/><circle cx="23.5" cy="22.6" r="8.4" fill="#c41f3d"/><path d="M21.5 20.6Q28.5 20.6 25.5 27.6" stroke="#fff" stroke-width="2.4" fill="none"/><path d="M24.0 16.6L19.0 20.6L24.0 24.6Z" fill="#fff"/></svg>
<div class="msep" style="top:237.0px"></div>
<div class="mi" style="left:57px;top:243.0px;line-height:40px">Rescue</div>
<svg class="abs" style="left:8px;top:246.5px" width="32" height="32" viewBox="0 0 32 32"><path d="M16.90 5.10A10.6 10.6 0 0 1 27.50 15.70" stroke="#c8203f" stroke-width="9.2" fill="none"/><path d="M27.50 15.70A10.6 10.6 0 0 1 16.90 26.30" stroke="#c2c2c2" stroke-width="9.2" fill="none"/><path d="M16.90 26.30A10.6 10.6 0 0 1 6.30 15.70" stroke="#c8203f" stroke-width="9.2" fill="none"/><path d="M6.30 15.70A10.6 10.6 0 0 1 16.90 5.10" stroke="#c2c2c2" stroke-width="9.2" fill="none"/><path d="M16.9 0.5V9.7M16.9 21.7V30.9M1.6999999999999993 15.7H10.899999999999999M22.9 15.7H32.099999999999994" stroke="#f9f9f9" stroke-width="1"/></svg>
<div class="msep" style="top:287.0px"></div>
<div class="mi" style="left:57px;top:293.5px;line-height:40px">Import</div>
<div class="arr" style="left:276px;top:309.5px"></div>
<svg class="abs" style="left:8px;top:297px" width="32" height="32" viewBox="0 0 32 32"><path d="M5.3 2H19L27.2 10V30H5.3Z" fill="#eeeeee" stroke="#5a5a5a" stroke-width="1.3"/><path d="M19 2V10H27.2Z" fill="#3d3d3d"/><circle cx="23.2" cy="22" r="9.6" fill="#f9f9f9"/><circle cx="23.2" cy="22" r="8.4" fill="#c41f3d"/><path d="M23.2 17V25" stroke="#fff" stroke-width="2.4"/><path d="M18.7 22.5L23.2 27L27.7 22.5Z" fill="#fff"/></svg>
<div class="mi" style="left:57px;top:333.5px;line-height:40px">Export</div>
<div class="arr" style="left:276px;top:349.5px"></div>
<svg class="abs" style="left:8px;top:337px" width="32" height="32" viewBox="0 0 32 32"><path d="M5.3 2H19L27.2 10V30H5.3Z" fill="#eeeeee" stroke="#5a5a5a" stroke-width="1.3"/><path d="M19 2V10H27.2Z" fill="#2f6e57"/><circle cx="23.2" cy="22" r="9.6" fill="#f9f9f9"/><circle cx="23.2" cy="22" r="8.4" fill="#c41f3d"/><path d="M23.2 27V19" stroke="#fff" stroke-width="2.4"/><path d="M18.7 21.5L23.2 17L27.7 21.5Z" fill="#fff"/></svg>
<div class="mi" style="left:57px;top:373.5px;line-height:40px">Fabrication Outputs</div>
<div class="arr" style="left:276px;top:389.5px"></div>
<svg class="abs" style="left:8px;top:377px" width="32" height="32" viewBox="0 0 32 32"><path d="M3.3 3.7H10V13.5L17 9.5V13.5L24 9.5V13.5L31.2 9.5V27.6H3.3Z" fill="#4b4b4b"/><rect x="6.5" y="20.5" width="4.5" height="3" fill="#fff"/><rect x="14.5" y="20.5" width="4.5" height="3" fill="#fff"/><rect x="22.5" y="20.5" width="4.5" height="3" fill="#fff"/></svg>
<div class="msep" style="top:417.5px"></div>
<div class="mi" style="left:57px;top:424.5px;line-height:40px">Board Setup...</div>
<svg class="abs" style="left:8px;top:428px" width="32" height="32" viewBox="0 0 32 32"><rect x="3.3" y="2" width="27.9" height="26.6" rx="3" fill="#1f7a27"/><path d="M7.3 2Q9.3 12 17.3 14M12.3 2Q15.3 9 31.2 11M18.3 2Q21.3 5 31.2 6M3.3 18Q11.3 19 15.3 28.6" stroke="#52b04c" stroke-width="1.6" fill="none"/><circle cx="6.3" cy="16.5" r="1.8" fill="#d9e85a"/><circle cx="28.7" cy="12" r="1.6" fill="#d9e85a"/><polygon points="30.90,21.20 28.33,23.57 28.47,27.07 24.97,26.93 22.60,29.50 20.23,26.93 16.73,27.07 16.87,23.57 14.30,21.20 16.87,18.83 16.73,15.33 20.23,15.47 22.60,12.90 24.97,15.47 28.47,15.33 28.33,18.83" fill="#c0213c"/><circle cx="22.6" cy="21.2" r="2.4" fill="#f3f3f3"/></svg>
<div class="msep" style="top:468.5px"></div>
<div class="mi" style="left:57px;top:474.5px;line-height:40px">Page Settings...</div>
<svg class="abs" style="left:8px;top:478px" width="32" height="32" viewBox="0 0 32 32"><path d="M8.6 2.5H22.5L27.2 7.2V26.4H8.6Z" fill="#f1f1f1" stroke="#5b5b5b" stroke-width="1.2"/><path d="M22.5 2.5V7.2H27.2Z" fill="#444"/><path d="M4 2V28" stroke="#5b5b5b" stroke-width="1.2"/><path d="M8.6 29.7H27.2M8.6 28V31.4M27.2 28V31.4" stroke="#5b5b5b" stroke-width="1.2"/></svg>
<div class="mi" style="left:57px;top:515.0px;line-height:40px">Print...</div>
<div class="mi" style="right:752px;top:515.0px;line-height:40px">Ctrl+P</div>
<svg class="abs" style="left:8px;top:518.5px" width="32" height="32" viewBox="0 0 32 32"><rect x="7.2" y="2.3" width="19.2" height="7" rx="1" fill="#f6f6f6" stroke="#555" stroke-width="1.3"/><path d="M1.5 10Q1.5 8.4 3.2 8.4H30.2Q31.9 8.4 31.9 10V22.1H1.5Z" fill="#4f4f4f"/><path d="M7 15.9H26.6V25.5L22.6 29.5H7Z" fill="#f6f6f6" stroke="#555" stroke-width="1.3"/></svg>
<div class="mi" style="left:57px;top:555.0px;line-height:40px">Plot...</div>
<svg class="abs" style="left:8px;top:558.5px" width="32" height="32" viewBox="0 0 32 32"><rect x="9" y="1.5" width="15" height="5" fill="#f4f4f4" stroke="#555" stroke-width="1.2"/><rect x="1.3" y="6.3" width="30.5" height="7.5" fill="#4a4a4a"/><path d="M10 12H23V21.5L20 24H10Z" fill="#f4f4f4" stroke="#555" stroke-width="1.2"/><path d="M4 13.5V29.5M29 13.5V29.5M1.3 29.4H6.7M26.3 29.4H31.7" stroke="#4a4a4a" stroke-width="1.5"/></svg>
<div class="msep" style="top:599.5px"></div>
<div class="mi" style="left:57px;top:605.5px;line-height:40px">Close</div>
<svg class="abs" style="left:8px;top:609px" width="32" height="32" viewBox="0 0 32 32"><rect x="1.3" y="0.5" width="30.5" height="30.5" rx="4" fill="#c41f3d"/><path d="M11.6 9.2A10.3 10.3 0 1 0 21.4 9.2" stroke="#f6dde2" stroke-width="2.1" fill="none"/><path d="M16.5 3V14" stroke="#f6dde2" stroke-width="2.1"/></svg>
<div id="smenu" class="abs"></div>
<div class="hl" style="left:307px;top:375px;width:365px;height:36.5px"></div>
<div class="mi" style="left:360px;top:373px;line-height:40px">Gerbers (.gbr)...</div>
<svg class="abs" style="left:310px;top:377px" width="32" height="32" viewBox="0 0 32 32"><rect x="6" y="2.5" width="20" height="22" fill="#c4c4c4"/><rect x="3.3" y="5.5" width="23.6" height="10.3" rx="1.5" fill="#3181c4"/><text x="15" y="14.2" font-family="Liberation Sans" font-size="11.5" font-weight="bold" fill="#fff" text-anchor="middle" letter-spacing="-0.3">.gbr</text><circle cx="24.8" cy="22.3" r="9.6" fill="#f9f9f9"/><circle cx="24.8" cy="22.3" r="8.4" fill="#c41f3d"/><path d="M24.8 27.3V19.3" stroke="#fff" stroke-width="2.4"/><path d="M20.3 21.8L24.8 17.3L29.3 21.8Z" fill="#fff"/></svg>
<div class="mi" style="left:360px;top:414px;line-height:40px">Drill Files (.drl)...</div>
<svg class="abs" style="left:310px;top:418px" width="32" height="32" viewBox="0 0 32 32"><rect x="6" y="2.5" width="20" height="22" fill="#c4c4c4"/><rect x="3.3" y="5.5" width="23.6" height="10.3" rx="1.5" fill="#3181c4"/><text x="15" y="14.2" font-family="Liberation Sans" font-size="11.5" font-weight="bold" fill="#fff" text-anchor="middle" letter-spacing="-0.3">.drl</text><circle cx="24.8" cy="22.3" r="9.6" fill="#f9f9f9"/><circle cx="24.8" cy="22.3" r="8.4" fill="#c41f3d"/><path d="M24.8 27.3V19.3" stroke="#fff" stroke-width="2.4"/><path d="M20.3 21.8L24.8 17.3L29.3 21.8Z" fill="#fff"/></svg>
<div class="mi" style="left:360px;top:454px;line-height:40px">IPC-2581 File (.xml)...</div>
<svg class="abs" style="left:310px;top:458px" width="32" height="32" viewBox="0 0 32 32"><rect x="6" y="2.5" width="20" height="22" fill="#c4c4c4"/><rect x="3.3" y="5.5" width="23.6" height="10.3" rx="1.5" fill="#3181c4"/><text x="15" y="14.2" font-family="Liberation Sans" font-size="11.5" font-weight="bold" fill="#fff" text-anchor="middle" letter-spacing="-0.3">.xml</text><circle cx="24.8" cy="22.3" r="9.6" fill="#f9f9f9"/><circle cx="24.8" cy="22.3" r="8.4" fill="#c41f3d"/><path d="M24.8 27.3V19.3" stroke="#fff" stroke-width="2.4"/><path d="M20.3 21.8L24.8 17.3L29.3 21.8Z" fill="#fff"/></svg>
<div class="mi" style="left:360px;top:494px;line-height:40px">ODB++ Output File...</div>
<svg class="abs" style="left:310px;top:498px" width="32" height="32" viewBox="0 0 32 32"><rect x="6" y="2.5" width="20" height="22" fill="#c4c4c4"/><rect x="3.3" y="5.5" width="23.6" height="10.3" rx="1.5" fill="#3181c4"/><text x="15" y="14.2" font-family="Liberation Sans" font-size="11.5" font-weight="bold" fill="#fff" text-anchor="middle" letter-spacing="-0.3">.odb</text><circle cx="24.8" cy="22.3" r="9.6" fill="#f9f9f9"/><circle cx="24.8" cy="22.3" r="8.4" fill="#c41f3d"/><path d="M24.8 27.3V19.3" stroke="#fff" stroke-width="2.4"/><path d="M20.3 21.8L24.8 17.3L29.3 21.8Z" fill="#fff"/></svg>
<div class="mi" style="left:360px;top:534px;line-height:40px">Component Placement (.pos, .gbr)...</div>
<svg class="abs" style="left:310px;top:538px" width="32" height="32" viewBox="0 0 32 32"><rect x="6" y="2.5" width="20" height="22" fill="#c4c4c4"/><rect x="3.3" y="5.5" width="23.6" height="10.3" rx="1.5" fill="#3181c4"/><text x="15" y="14.2" font-family="Liberation Sans" font-size="11.5" font-weight="bold" fill="#fff" text-anchor="middle" letter-spacing="-0.3">.pos</text><circle cx="24.8" cy="22.3" r="9.6" fill="#f9f9f9"/><circle cx="24.8" cy="22.3" r="8.4" fill="#c41f3d"/><path d="M24.8 27.3V19.3" stroke="#fff" stroke-width="2.4"/><path d="M20.3 21.8L24.8 17.3L29.3 21.8Z" fill="#fff"/></svg>
<div class="mi" style="left:360px;top:574px;line-height:40px">Footprint Report (.rpt)...</div>
<svg class="abs" style="left:310px;top:578px" width="32" height="32" viewBox="0 0 32 32"><rect x="6" y="2.5" width="20" height="22" fill="#c4c4c4"/><rect x="3.3" y="5.5" width="23.6" height="10.3" rx="1.5" fill="#3181c4"/><text x="15" y="14.2" font-family="Liberation Sans" font-size="11.5" font-weight="bold" fill="#fff" text-anchor="middle" letter-spacing="-0.3">.rpt</text><circle cx="24.8" cy="22.3" r="9.6" fill="#f9f9f9"/><circle cx="24.8" cy="22.3" r="8.4" fill="#c41f3d"/><path d="M24.8 27.3V19.3" stroke="#fff" stroke-width="2.4"/><path d="M20.3 21.8L24.8 17.3L29.3 21.8Z" fill="#fff"/></svg>
<div class="mi" style="left:360px;top:614px;line-height:40px">IPC-D-356 Netlist File...</div>
<svg class="abs" style="left:310px;top:618px" width="32" height="32" viewBox="0 0 32 32"><rect x="6" y="2.5" width="20" height="22" fill="#c4c4c4"/><rect x="3.3" y="5.5" width="23.6" height="10.3" rx="1.5" fill="#3181c4"/><text x="15" y="14.2" font-family="Liberation Sans" font-size="11.5" font-weight="bold" fill="#fff" text-anchor="middle" letter-spacing="-0.3">.356</text><circle cx="24.8" cy="22.3" r="9.6" fill="#f9f9f9"/><circle cx="24.8" cy="22.3" r="8.4" fill="#c41f3d"/><path d="M24.8 27.3V19.3" stroke="#fff" stroke-width="2.4"/><path d="M20.3 21.8L24.8 17.3L29.3 21.8Z" fill="#fff"/></svg>
<div class="mi" style="left:360px;top:654px;line-height:40px">Bill of Materials...</div>
<svg class="abs" style="left:310px;top:658px" width="32" height="32" viewBox="0 0 32 32"><rect x="6" y="2.5" width="20" height="22" fill="#c4c4c4"/><rect x="3.3" y="5.5" width="23.6" height="10.3" rx="1.5" fill="#3181c4"/><text x="15" y="14.2" font-family="Liberation Sans" font-size="11.5" font-weight="bold" fill="#fff" text-anchor="middle" letter-spacing="-0.3">.bom</text><circle cx="24.8" cy="22.3" r="9.6" fill="#f9f9f9"/><circle cx="24.8" cy="22.3" r="8.4" fill="#c41f3d"/><path d="M24.8 27.3V19.3" stroke="#fff" stroke-width="2.4"/><path d="M20.3 21.8L24.8 17.3L29.3 21.8Z" fill="#fff"/></svg>
<svg class="abs" style="left:0;top:0" width="1024" height="902" viewBox="0 0 1024 902"><path d="M525 292.5L457 364" stroke="#e3161d" stroke-width="5.5" stroke-linecap="round"/><path d="M444.6 381.5L452 359.5L465 371.5Z" fill="#e3161d" stroke="#e3161d" stroke-width="1.5" stroke-linejoin="round"/></svg>
</body></html>
